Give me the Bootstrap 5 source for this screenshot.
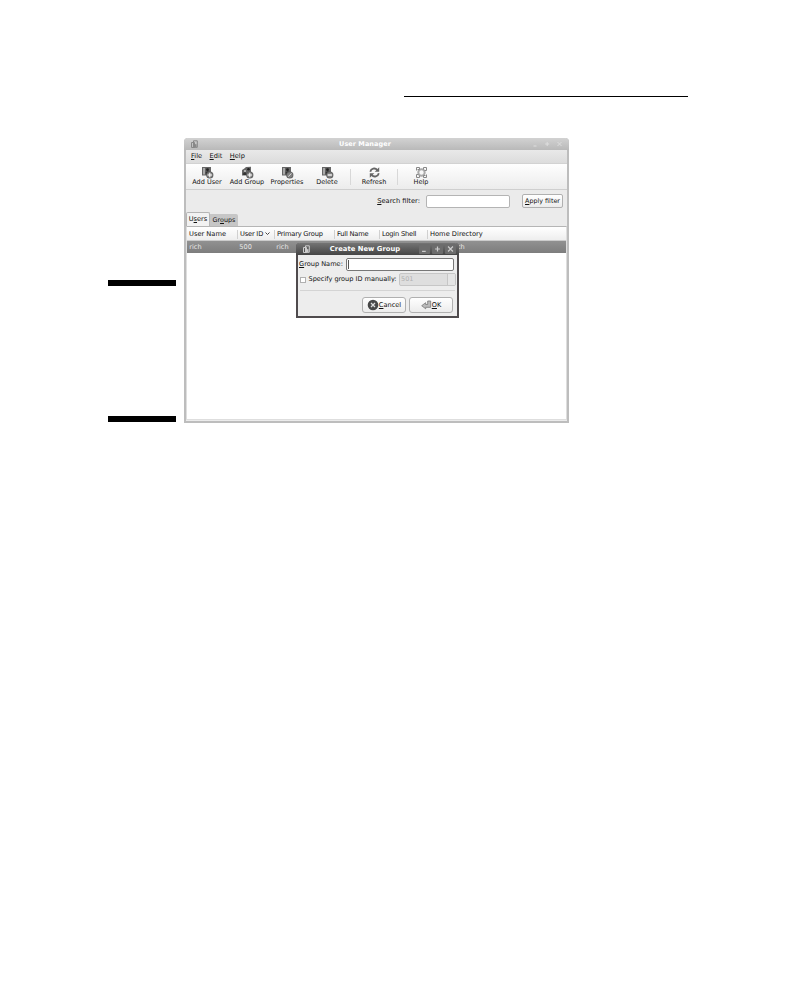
<!DOCTYPE html>
<html lang="en">
<head>
<meta charset="utf-8">
<title>User Manager</title>
<link href="https://cdn.jsdelivr.net/npm/bootstrap@5.3.0/dist/css/bootstrap.min.css" rel="stylesheet">
<style>
body{background:#fff;width:797px;height:999px;overflow:hidden;font:6.6px/9px "DejaVu Sans",sans-serif;color:#111;text-rendering:geometricPrecision}
u{text-underline-offset:1px;text-decoration-thickness:.6px}
.rule{width:284px;height:1px;margin:96px 0 0 404px;background:#000}
.stage{margin:41px 0 0 108px}
.side{width:68px;margin-right:8px;height:284px;padding-top:142px}
.thick{height:6px;background:#000}
.win{width:385px;height:285px;background:#ebebeb;border:solid #bdbdbd;border-width:0 2px 2px;border-radius:4px 4px 0 0}
.bar{height:12px;margin:0 -2px;padding:0 5px 0 6px;border-radius:4px 4px 0 0;background:linear-gradient(#d2d2d2,#b9b9b9);color:#fff;font-weight:700;font-size:6.5px}
.bar .name{padding-left:4px;letter-spacing:.06px}
.ctl{width:9px;height:8px;margin-left:3px;color:#dedede}
.menus{height:13px;padding-left:5px;gap:7.5px;background:linear-gradient(#e9e9e9,#dcdcdc);font-size:6.6px}
.tools{height:27px;background:linear-gradient(#fefefe,#ececec);border-top:1px solid #d2d2d2;border-bottom:1px solid #cfcfcf;font-size:6.5px;padding-left:1px}
.tool{width:40px;padding-top:2px}
.tool svg{width:13px;height:13px;flex:none}
.tool span{line-height:8px;margin-top:-1px;white-space:nowrap}
.split{width:1px;height:16px;background:#d8d8d8;margin:0 3px}
.filter{height:22px;margin-right:4px;font-size:6.7px}
.field{width:84px;height:13px;background:#fff;border:1px solid #b4b4b4;border-radius:2px;margin:0 12px 0 6px}
.push{height:14px;border:1px solid #b0b0b0;border-radius:2px;background:linear-gradient(#fff,#ececec);white-space:nowrap}
.apply{width:41px;font-size:6.4px}
.tabs{height:14px}
.tab1{width:24px;height:14px;background:#f2f2f2;border:1px solid #b5b5b5;border-bottom:0;border-radius:2px 2px 0 0}
.tab2{width:28px;height:12px;background:#c6c6c6;border-radius:0 2px 0 0;font-size:6.4px}
.list{background:#fff;border:1px solid #dedede;border-top-color:#b5b5b5;height:194px}
.cols{display:grid;grid-template-columns:50px 37px 60px 45px 48px 1fr;align-items:center}
.head{height:14px;background:linear-gradient(#fff,#eee);border-bottom:1px solid #ccc;font-size:6.7px;padding-top:1px}
.head>span{border-left:1px solid #d0d0d0;padding-left:2px;white-space:nowrap}
.head>span:first-child{border:0}
.head .tight{letter-spacing:-.2px}
.sel{height:12px;background:linear-gradient(#919191,#7d7d7d);color:#e6e6e6}
.sel>span{padding-left:2.3px}
.dlg{left:110px;top:105px;width:163px;height:75px;background:#ededed;border:2px solid #4f4b4d;border-top:0;border-radius:4px 4px 0 0}
.dlg .bar{height:12px;background:linear-gradient(#747474,#454545);padding:0 3px 0 6px;font-size:6.75px}
.dlg .bar .name{padding-left:3px}
.dlg .ctl{background:#6c6c6c;color:#ccc;width:11px;height:10px;margin-left:2px;border-radius:1px}
.dlg .field{width:108px;height:13px;margin:0 3px 0 0;border-color:#777;padding:1px}
.caret{width:1px;height:9px;background:#555}
.box{width:6px;height:6px;background:#fff;border:1px solid #b0b0b0;margin:0 3px 0 0}
.spin{width:57px;height:13px;border:1px solid #c6c6c6;border-radius:2px;background:#dedede;color:#b2b2b2;padding-left:1px}
.spin i{width:8px;height:11px;border-left:1px solid #c6c6c6;background:#e5e5e5}
.dlg .push{width:44px;height:16px;border-radius:3px}
.gname{height:16px;margin-top:1px;padding-left:1px}
.gid{height:15px;padding:0 1px 0 1.5px;white-space:nowrap;font-size:6.55px}
.acts{gap:3px;margin:3px 2px 0;padding:6px 2px 0 0;border-top:1px solid #d4d4d4}
</style>
<script src="https://cdn.jsdelivr.net/npm/bootstrap@5.3.0/dist/js/bootstrap.bundle.min.js"></script>
</head>
<body>
<svg width="0" height="0" class="d-none">
<defs>
<g id="card"><rect x="1" y="1" width="9" height="8.5" fill="#666"/><rect x="2" y="2" width="2" height="6.5" fill="#aaa"/><circle cx="6.5" cy="3.7" r="1.4" fill="#222"/><path d="M4.7 8.5V6q2-1.6 4 0v2.5z" fill="#333"/></g>
<g id="disc"><circle cx="8.8" cy="9" r="3.6" fill="#5a5a5a"/><circle cx="8.8" cy="9" r="2.8" fill="#808080"/></g>
<g id="mini"><path d="M1.5 2.5h3v5h-3zM3.5.8h3.8v6.5H3.5z" fill="none" stroke="currentColor"/><path d="M4.5 4.2h2v3h-2z" fill="currentColor"/></g>
</defs>
</svg>
<div class="rule"></div>
<main class="stage d-flex">
<aside class="side d-flex flex-column justify-content-between"><div class="thick"></div><div class="thick"></div></aside>
<section class="win position-relative">
<div class="bar d-flex align-items-center"><svg width="8" height="8" color="#888"><use href="#mini"/></svg><span class="name flex-grow-1 text-center">User Manager</span>
<svg class="ctl" viewBox="0 0 9 8"><path d="M2.5 6h3" stroke="currentColor"/></svg><svg class="ctl" viewBox="0 0 9 8"><path d="M2.2 4h4M4.2 2v4" stroke="currentColor"/></svg><svg class="ctl" viewBox="0 0 9 8"><path d="M2.5 2l4 4m0-4l-4 4" stroke="currentColor"/></svg></div>
<nav class="menus d-flex align-items-center"><span><u>F</u>ile</span><span><u>E</u>dit</span><span><u>H</u>elp</span></nav>
<div class="tools d-flex">
<div class="tool d-flex flex-column align-items-center"><svg viewBox="0 0 13 13"><use href="#card"/><use href="#disc"/><path d="M6.6 9h4.4M8.8 6.8v4.4" stroke="#fff" stroke-width="1.1"/></svg><span>Add User</span></div>
<div class="tool d-flex flex-column align-items-center"><svg viewBox="0 0 13 13"><path d="M1 9.5V4l2-1.2L5 1l5-.2V9.5z" fill="#666"/><circle cx="7.5" cy="3.2" r="1.3" fill="#222"/><circle cx="4" cy="4.9" r="1" fill="#ccc"/><path d="M2.2 9V7q1.6-1.4 3.2 0v2z" fill="#333"/><use href="#disc"/><path d="M6.6 9h4.4M8.8 6.8v4.4" stroke="#fff" stroke-width="1.1"/></svg><span>Add Group</span></div>
<div class="tool d-flex flex-column align-items-center"><svg viewBox="0 0 13 13"><use href="#card"/><use href="#disc"/><path d="M7.2 10.6l3.3-3.2" stroke="#ddd"/></svg><span>Properties</span></div>
<div class="tool d-flex flex-column align-items-center"><svg viewBox="0 0 13 13"><use href="#card"/><use href="#disc"/><path d="M6.7 9h4.2" stroke="#fff" stroke-width="1.3"/></svg><span>Delete</span></div>
<div class="split align-self-center"></div>
<div class="tool d-flex flex-column align-items-center"><svg viewBox="0 0 13 13" fill="none" stroke="#666" stroke-width="1.8"><path d="M2.3 5.8C3 2.3 7 1.5 9.3 3.8M10.8 7.2C10 10.7 6 11.5 3.7 9.2"/><path d="M11.2 1.3v4.5H6.7zM1.8 11.7V7.2h4.5z" fill="#666" stroke="none"/></svg><span>Refresh</span></div>
<div class="split align-self-center"></div>
<div class="tool d-flex flex-column align-items-center"><svg viewBox="0 0 13 13" fill="none" stroke="#888"><circle cx="6.5" cy="6.5" r="3.2" stroke="#aaa" stroke-width="2"/><path d="M1.5 4.5v-3h3v2h-2M8.5 3.5v-2h3v3h-2M11.5 8.5v3h-3v-2h2M4.5 9.5v2h-3v-3h2"/></svg><span>Help</span></div>
</div>
<div class="filter d-flex align-items-center justify-content-end"><span><u>S</u>earch filter:</span><div class="field"></div><div class="push apply d-flex align-items-center justify-content-center"><span><u>A</u>pply filter</span></div></div>
<div class="tabs d-flex align-items-end"><div class="tab1 d-flex align-items-center justify-content-center"><span>U<u>s</u>ers</span></div><div class="tab2 d-flex align-items-center justify-content-center"><span>Gr<u>o</u>ups</span></div></div>
<div class="list">
<div class="cols head"><span>User Name</span><span class="tight">User ID <svg width="5" height="4" fill="none" stroke="#444"><path d="M.5.5l2 2 2-2"/></svg></span><span class="tight">Primary Group</span><span class="tight">Full Name</span><span class="tight">Login Shell</span><span>Home Directory</span></div>
<div class="cols sel"><span>rich</span><span>500</span><span>rich</span><span></span><span></span><span>/home/rich</span></div>
</div>
<div class="dlg position-absolute">
<div class="bar d-flex align-items-center"><svg width="8" height="8" color="#ccc"><use href="#mini"/></svg><span class="name flex-grow-1 text-center">Create New Group</span><svg class="ctl" viewBox="0 0 9 8"><path d="M2.5 6h3" stroke="currentColor"/></svg><svg class="ctl" viewBox="0 0 9 8"><path d="M2.5 4h4M4.5 2v4" stroke="currentColor"/></svg><svg class="ctl" viewBox="0 0 9 8"><path d="M2.5 2l4 4m0-4l-4 4" stroke="currentColor"/></svg></div>
<div class="gname d-flex align-items-center justify-content-between"><span><u>G</u>roup Name:</span><div class="field"><div class="caret"></div></div></div>
<div class="gid d-flex align-items-center"><div class="box"></div><span>Specify group ID manually:</span><div class="spin d-flex align-items-center justify-content-between ms-auto"><span>501</span><i></i></div></div>
<div class="acts d-flex justify-content-end">
<div class="push d-flex align-items-center justify-content-center"><svg width="12" height="12"><circle cx="6" cy="6" r="5.3" fill="#484848"/><path d="M4 4l4 4m0-4l-4 4" stroke="#ddd" stroke-width="1.3"/></svg><span><u>C</u>ancel</span></div>
<div class="push d-flex align-items-center justify-content-center"><svg width="11" height="10" fill="#bbb" stroke="#777" stroke-width=".8"><path d="M.7 5.7l4-3v1.8h2V1h3v6.3h-5v1.5z"/></svg><span><u>O</u>K</span></div>
</div>
</div>
</section>
</main>
</body>
</html>
